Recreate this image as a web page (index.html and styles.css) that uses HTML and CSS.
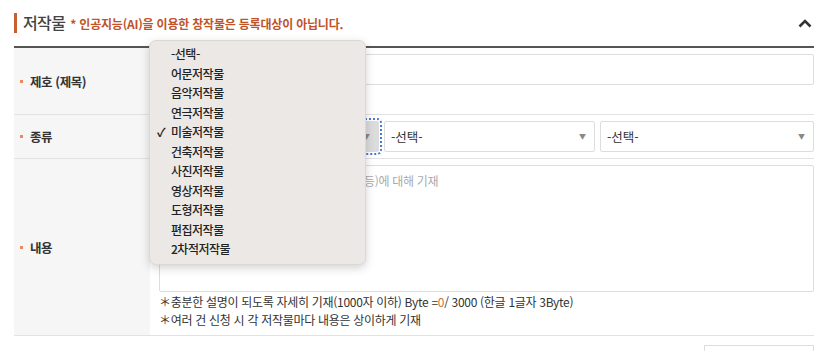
FILE: index.html
```html
<!DOCTYPE html>
<html lang="ko">

<head>
    <meta charset="UTF-8">
    <meta name="viewport" content="width=device-width, initial-scale=1.0">
    <title>저작물</title>
    <link rel="stylesheet" href="styles.css">
</head>

<body>
    <section class="work-section">
        <div class="section-head">
            <h3 class="section-title">저작물 <span class="ai-note">* 인공지능(AI)을 이용한 창작물은 등록대상이 아닙니다.</span></h3>
            <button class="fold-btn" aria-label="접기">
                <svg width="14" height="9" viewBox="0 0 14 9"><polyline points="1.5,7.5 7,2 12.5,7.5" fill="none" stroke="#333" stroke-width="2.6"/></svg>
            </button>
        </div>

        <div class="form-table">
            <div class="form-row row-title">
                <div class="label"><span class="dot"></span>제호 (제목)</div>
                <div class="field">
                    <input type="text" class="text-input">
                </div>
            </div>
            <div class="form-row row-kind">
                <div class="label"><span class="dot"></span>종류</div>
                <div class="field select-group">
                    <div class="select focused"><span class="arrow">▼</span></div>
                    <div class="select">-선택-<span class="arrow">▼</span></div>
                    <div class="select">-선택-<span class="arrow">▼</span></div>
                </div>
            </div>
            <div class="form-row row-content">
                <div class="label"><span class="dot"></span>내용</div>
                <div class="field">
                    <textarea class="text-area" placeholder="저작물의 표현 형식, 창작 의도 (제작기법 등)에 대해 기재"></textarea>
                    <p class="help">＊충분한 설명이 되도록 자세히 기재(1000자 이하) Byte =<span class="count">0</span>/ 3000 (한글 1글자 3Byte)</p>
                    <p class="help">＊여러 건 신청 시 각 저작물마다 내용은 상이하게 기재</p>
                </div>
            </div>
        </div>

        <div class="next-row">
            <div class="next-box"></div>
        </div>

        <!-- native select popup (open) -->
        <ul class="select-popup">
            <li>-선택-</li>
            <li>어문저작물</li>
            <li>음악저작물</li>
            <li>연극저작물</li>
            <li class="checked">미술저작물</li>
            <li>건축저작물</li>
            <li>사진저작물</li>
            <li>영상저작물</li>
            <li>도형저작물</li>
            <li>편집저작물</li>
            <li>2차적저작물</li>
        </ul>
    </section>
</body>

</html>
```

FILE: styles.css
```css
body {
    margin: 0;
    font-family: "Noto Sans CJK KR", "Noto Sans", sans-serif;
    color: #333;
    background-color: #fff;
}

.work-section {
    position: relative;
    padding: 0 14px;
}

.section-head {
    display: flex;
    justify-content: space-between;
    align-items: center;
    height: 46px;
    border-bottom: 2px solid #555;
}

.section-title {
    margin: 0;
    padding-left: 6px;
    border-left: 3px solid #c8602e;
    font-size: 16px;
    font-weight: 500;
    letter-spacing: -0.6px;
    line-height: 18px;
    color: #444;
}

.ai-note {
    margin-left: 1px;
    font-size: 12px;
    font-weight: 700;
    letter-spacing: -0.2px;
    color: #c0532a;
}

.fold-btn {
    border: none;
    background: none;
    padding: 0;
    margin-right: 2px;
    display: flex;
}

.form-row {
    display: flex;
    border-bottom: 1px solid #e2e2e2;
}

.label {
    width: 136px;
    display: flex;
    align-items: center;
    background-color: #f6f6f6;
    font-size: 12.5px;
    font-weight: 700;
    letter-spacing: -0.4px;
    color: #333;
}

.dot {
    width: 3px;
    height: 3px;
    margin: 0 7px 0 6px;
    background-color: #e98a5e;
}

.field {
    flex: 1;
    padding: 6px 0 6px 9px;
}

.row-title .field {
    padding-bottom: 29px;
}

.text-input {
    display: block;
    box-sizing: border-box;
    width: 100%;
    height: 31px;
    border: 1px solid #ddd;
    border-radius: 2px;
}

.select-group {
    display: grid;
    grid-template-columns: 220px 211px 1fr;
    gap: 5px;
}

.select {
    position: relative;
    box-sizing: border-box;
    height: 31px;
    padding: 0 6px;
    border: 1px solid #ddd;
    border-radius: 2px;
    font-size: 12.5px;
    line-height: 29px;
    color: #333;
}

.select.focused {
    background-color: #dcdcdc;
    outline: 2px dotted #4a78d8;
    outline-offset: 1px;
}

.arrow {
    position: absolute;
    right: 8px;
    top: 0;
    font-size: 7px;
    color: #888;
}

.text-area {
    display: block;
    box-sizing: border-box;
    width: 100%;
    height: 127px;
    padding: 6px 7px;
    border: 1px solid #ddd;
    border-radius: 2px;
    resize: none;
    font-family: inherit;
    font-size: 12px;
    letter-spacing: -0.3px;
}

.text-area::placeholder {
    color: #aaa;
}

.help {
    margin: 0;
    font-size: 12px;
    letter-spacing: -0.3px;
    line-height: 18px;
    color: #333;
}

.help:first-of-type {
    margin-top: 1px;
}

.count {
    color: #d0703e;
}

.next-row {
    display: flex;
    justify-content: flex-end;
    padding-top: 9px;
}

.next-box {
    width: 110px;
    height: 30px;
    border: 1px solid #ddd;
    box-sizing: border-box;
}

.select-popup {
    position: absolute;
    left: 149px;
    top: 40px;
    width: 215px;
    margin: 0;
    padding: 3px 0 5px;
    list-style: none;
    background-color: #ebe8e5;
    border: 1px solid #dcd8d4;
    border-radius: 7px;
    box-shadow: 0 3px 10px rgba(0, 0, 0, 0.18);
}

.select-popup li {
    position: relative;
    padding-left: 21px;
    font-size: 12px;
    font-weight: 500;
    letter-spacing: -0.5px;
    line-height: 19.5px;
    color: #222;
}

.select-popup li.checked::before {
    content: "✓";
    position: absolute;
    left: 7px;
    font-weight: 700;
}
```
